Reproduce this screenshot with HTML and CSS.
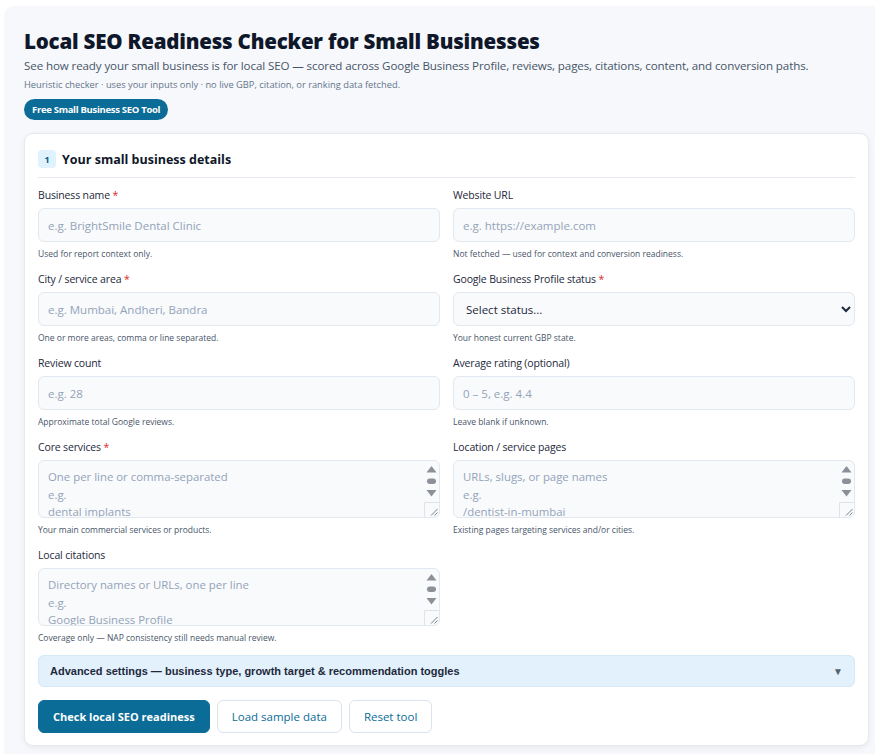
FILE: index.html
```html
<!DOCTYPE html>
<html lang="en">
<head>
<meta charset="utf-8">
<title>Local SEO Readiness Checker for Small Businesses</title>
<link rel="stylesheet" href="styles.css">
</head>
<body>
<div class="shell">
  <header class="intro">
    <h1 class="title">Local SEO Readiness Checker for Small Businesses</h1>
    <p class="lead">See how ready your small business is for local SEO — scored across Google Business Profile, reviews, pages, citations, content, and conversion paths.</p>
    <p class="note">Heuristic checker · uses your inputs only · no live GBP, citation, or ranking data fetched.</p>
    <span class="pill">Free Small Business SEO Tool</span>
  </header>

  <section class="card">
    <div class="card-head">
      <span class="step">1</span>
      <h2 class="card-title">Your small business details</h2>
    </div>

    <div class="grid">
      <div class="field">
        <label class="label">Business name <span class="req">*</span></label>
        <input class="control" type="text" placeholder="e.g. BrightSmile Dental Clinic">
        <p class="hint">Used for report context only.</p>
      </div>
      <div class="field">
        <label class="label">Website URL</label>
        <input class="control" type="text" placeholder="e.g. https://example.com">
        <p class="hint">Not fetched — used for context and conversion readiness.</p>
      </div>

      <div class="field">
        <label class="label">City / service area <span class="req">*</span></label>
        <input class="control" type="text" placeholder="e.g. Mumbai, Andheri, Bandra">
        <p class="hint">One or more areas, comma or line separated.</p>
      </div>
      <div class="field">
        <label class="label">Google Business Profile status <span class="req">*</span></label>
        <select class="control select">
          <option>Select status...</option>
        </select>
        <p class="hint">Your honest current GBP state.</p>
      </div>

      <div class="field">
        <label class="label">Review count</label>
        <input class="control" type="text" placeholder="e.g. 28">
        <p class="hint">Approximate total Google reviews.</p>
      </div>
      <div class="field">
        <label class="label">Average rating (optional)</label>
        <input class="control" type="text" placeholder="0 – 5, e.g. 4.4">
        <p class="hint">Leave blank if unknown.</p>
      </div>

      <div class="field">
        <label class="label">Core services <span class="req">*</span></label>
        <div class="area-box">
          <textarea class="area" placeholder="One per line or comma-separated&#10;e.g.&#10;dental implants&#10;teeth whitening&#10;root canal treatment"></textarea>
          <svg class="sbar" width="15" height="56" viewBox="0 0 15 56" aria-hidden="true">
            <path d="M2.5 11.5 L7.5 5 L12.5 11.5 Z" fill="#8c9199"/>
            <rect x="3" y="17.5" width="9" height="5.5" rx="2.75" fill="#8c9199"/>
            <path d="M2.5 29 L7.5 35.5 L12.5 29 Z" fill="#8c9199"/>
            <path d="M0.5 56 V41.5 H15" fill="none" stroke="#dfe3e8" stroke-width="1"/>
            <path d="M7 54.5 L13.5 48 M10.5 54.5 L13.5 51.5" stroke="#6b7078" stroke-width="0.9"/>
          </svg>
        </div>
        <p class="hint">Your main commercial services or products.</p>
      </div>
      <div class="field">
        <label class="label">Location / service pages</label>
        <div class="area-box">
          <textarea class="area" placeholder="URLs, slugs, or page names&#10;e.g.&#10;/dentist-in-mumbai&#10;/dental-implants-andheri"></textarea>
          <svg class="sbar" width="15" height="56" viewBox="0 0 15 56" aria-hidden="true">
            <path d="M2.5 11.5 L7.5 5 L12.5 11.5 Z" fill="#8c9199"/>
            <rect x="3" y="17.5" width="9" height="5.5" rx="2.75" fill="#8c9199"/>
            <path d="M2.5 29 L7.5 35.5 L12.5 29 Z" fill="#8c9199"/>
            <path d="M0.5 56 V41.5 H15" fill="none" stroke="#dfe3e8" stroke-width="1"/>
            <path d="M7 54.5 L13.5 48 M10.5 54.5 L13.5 51.5" stroke="#6b7078" stroke-width="0.9"/>
          </svg>
        </div>
        <p class="hint">Existing pages targeting services and/or cities.</p>
      </div>

      <div class="field">
        <label class="label">Local citations</label>
        <div class="area-box">
          <textarea class="area" placeholder="Directory names or URLs, one per line&#10;e.g.&#10;Google Business Profile&#10;Justdial"></textarea>
          <svg class="sbar" width="15" height="56" viewBox="0 0 15 56" aria-hidden="true">
            <path d="M2.5 11.5 L7.5 5 L12.5 11.5 Z" fill="#8c9199"/>
            <rect x="3" y="17.5" width="9" height="5.5" rx="2.75" fill="#8c9199"/>
            <path d="M2.5 29 L7.5 35.5 L12.5 29 Z" fill="#8c9199"/>
            <path d="M0.5 56 V41.5 H15" fill="none" stroke="#dfe3e8" stroke-width="1"/>
            <path d="M7 54.5 L13.5 48 M10.5 54.5 L13.5 51.5" stroke="#6b7078" stroke-width="0.9"/>
          </svg>
        </div>
        <p class="hint">Coverage only — NAP consistency still needs manual review.</p>
      </div>
    </div>

    <div class="advanced">
      <span>Advanced settings — business type, growth target &amp; recommendation toggles</span>
      <span class="caret">▼</span>
    </div>

    <div class="actions">
      <button class="btn primary" type="button">Check local SEO readiness</button>
      <button class="btn ghost" type="button">Load sample data</button>
      <button class="btn ghost" type="button">Reset tool</button>
    </div>
  </section>
</div>
</body>
</html>
```

FILE: styles.css
```css
html, body {
  margin: 0;
  padding: 0;
  background: #ffffff;
  overflow: hidden;
}
body {
  font-family: "Open Sans", "Noto Sans", "Liberation Sans", sans-serif;
  color: #1e293b;
  padding: 6px 0 0 4px;
}
.shell {
  background: #f6f8fb;
  border-radius: 10px 0 0 0;
  padding: 21px 6px 8px 20px;
  min-height: 760px;
  box-sizing: border-box;
}
.title {
  margin: 0;
  font-size: 20.5px;
  line-height: 28px;
  font-weight: 800;
  color: #0f172a;
  letter-spacing: -0.2px;
}
.lead {
  margin: 3px 0 0;
  font-size: 11.6px;
  letter-spacing: -0.12px;
  line-height: 16px;
  color: #475569;
}
.note {
  margin: 4px 0 0;
  font-size: 9.3px;
  line-height: 13px;
  color: #64748b;
}
.pill {
  display: inline-block;
  margin-top: 8px;
  background: #0b6c97;
  color: #ffffff;
  font-size: 9.5px;
  font-weight: 700;
  line-height: 21px;
  padding: 0 8px;
  border-radius: 11px;
  letter-spacing: -0.3px;
}
.card {
  margin-top: 13px;
  background: #ffffff;
  border: 1px solid #e5e9f0;
  border-radius: 9px;
  box-shadow: 0 2px 6px rgba(15, 23, 42, 0.06);
  padding: 16px 13px 12px 13px;
}
.card-head {
  display: flex;
  align-items: center;
  gap: 6px;
  padding-bottom: 9px;
  border-bottom: 1px solid #e5e9f0;
  margin-bottom: 9px;
}
.step {
  width: 18px;
  height: 18px;
  border-radius: 4px;
  background: #e0f2fe;
  color: #075985;
  font-size: 9px;
  font-weight: 700;
  display: flex;
  align-items: center;
  justify-content: center;
}
.card-title {
  margin: 0;
  font-size: 12.5px;
  font-weight: 700;
  color: #0f172a;
}
.grid {
  display: grid;
  grid-template-columns: 1fr 1fr;
  column-gap: 13px;
  row-gap: 10px;
}
.field {
  display: flex;
  flex-direction: column;
}
.label {
  font-size: 10.5px;
  letter-spacing: -0.15px;
  line-height: 16px;
  color: #1e293b;
  margin-bottom: 5px;
}
.req {
  color: #dc2626;
}
.control {
  display: block;
  box-sizing: border-box;
  width: 100%;
  height: 34px;
  background: #f8fafc;
  border: 1px solid #e2e8f0;
  border-radius: 6px;
  padding: 0 9px;
  font-family: inherit;
  font-size: 11.5px;
  color: #1e293b;
  margin: 0;
}
.control::placeholder {
  color: #94a3b8;
}
.select {
  color: #1e293b;
  padding-left: 8px;
  font-size: 11.5px;
}
.area-box {
  display: flex;
  box-sizing: border-box;
  height: 58px;
  background: #f8fafc;
  border: 1px solid #e2e8f0;
  border-radius: 6px;
  overflow: hidden;
}
.area {
  flex: 1;
  min-width: 0;
  height: 100%;
  box-sizing: border-box;
  margin: 0;
  border: 0;
  background: transparent;
  padding: 7px 9px;
  font-family: inherit;
  font-size: 11.4px;
  line-height: 17.5px;
  color: #1e293b;
  overflow: hidden;
  resize: none;
  outline: none;
}
.area::placeholder {
  color: #94a3b8;
}
.sbar {
  display: block;
  flex: none;
}
.hint {
  margin: 5px 0 0;
  font-size: 8.5px;
  line-height: 14px;
  color: #475569;
}
.advanced {
  margin-top: 10px;
  height: 32px;
  box-sizing: border-box;
  background: #e2f1fb;
  border: 1px solid #d6e9f6;
  border-radius: 6px;
  display: flex;
  align-items: center;
  justify-content: space-between;
  padding: 0 11px;
  font-family: "Liberation Sans", Arial, sans-serif;
  font-size: 11px;
  font-weight: 700;
  color: #1e293b;
}
.caret {
  font-size: 10px;
  color: #556170;
}
.actions {
  display: flex;
  gap: 7px;
  margin-top: 13px;
}
.btn {
  height: 33px;
  border-radius: 6px;
  font-family: inherit;
  font-size: 11.5px;
  padding: 0 14px;
  cursor: pointer;
}
.primary {
  background: #0b6c97;
  border: 1px solid #0b6c97;
  color: #ffffff;
  font-weight: 700;
  font-size: 11px;
}
.ghost {
  background: #ffffff;
  border: 1px solid #dbe3ec;
  color: #0b6c97;
}
```
